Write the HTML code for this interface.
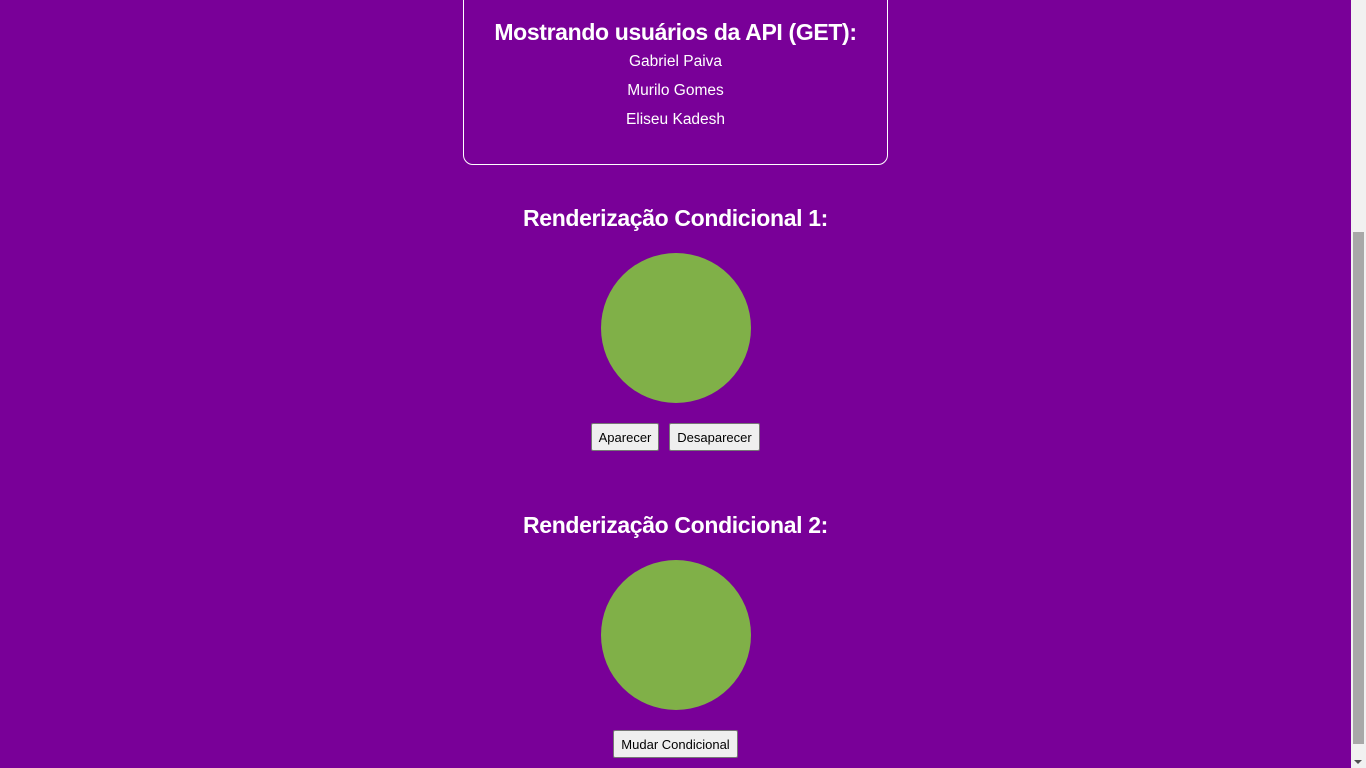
<!DOCTYPE html>
<html><head><meta charset="utf-8"><style>
*{margin:0;padding:0;box-sizing:border-box}
body{width:1366px;height:768px;overflow:hidden;background:#790098;font-family:"Liberation Sans",sans-serif;color:#fff;position:relative}
.box{position:absolute;left:463px;top:-20px;width:425px;height:185px;border:1px solid #fff;border-radius:10px}
.t{position:absolute;left:0;width:1351px;text-align:center;font-weight:bold;font-size:23px;letter-spacing:-0.35px}
.n{position:absolute;left:0;width:1351px;text-align:center;font-size:15.5px}
.c{position:absolute;left:601px;width:150px;height:150px;border-radius:50%;background:#80b048}
.b{position:absolute;height:28px;background:#efefef;border:1px solid #767676;border-radius:2px;color:#000;font-size:13px;line-height:27px;text-align:center}
.sb{position:absolute;left:1351px;top:0;width:15px;height:768px;background:#f1f1f1}
.th{position:absolute;left:1353px;top:232px;width:11px;height:512px;background:#a8a8a8}
.ar{position:absolute;left:1354px;top:760px;width:0;height:0;border-left:4px solid transparent;border-right:4px solid transparent;border-top:4px solid #505050}
</style></head><body>
<div class="box"></div>
<div class="t" style="top:19px">Mostrando usuários da API (GET):</div>
<div class="n" style="top:53px">Gabriel Paiva</div>
<div class="n" style="top:82px">Murilo Gomes</div>
<div class="n" style="top:111px">Eliseu Kadesh</div>
<div class="t" style="top:205px">Renderização Condicional 1:</div>
<div class="c" style="top:253px"></div>
<div class="b" style="left:591px;top:423px;width:68px">Aparecer</div>
<div class="b" style="left:669px;top:423px;width:91px">Desaparecer</div>
<div class="t" style="top:512px">Renderização Condicional 2:</div>
<div class="c" style="top:560px"></div>
<div class="b" style="left:613px;top:730px;width:125px">Mudar Condicional</div>
<div class="sb"></div><div class="th"></div><div class="ar"></div>
</body></html>
